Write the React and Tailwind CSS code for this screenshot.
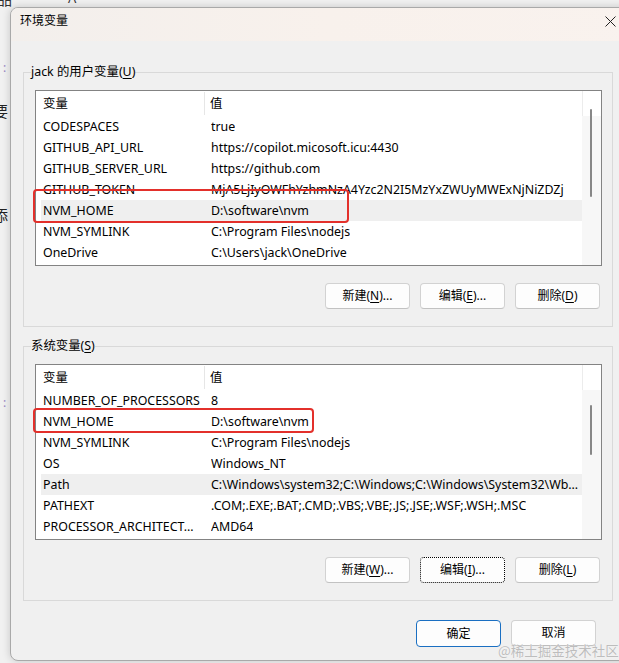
import React from "react";

const FONT = "font-['Noto_Sans','Noto_Sans_CJK_SC',sans-serif]";

function Mn({ children }) {
  return <span className="underline underline-offset-[2px] decoration-[1px]">{children}</span>;
}

function Btn({ children, focus, primary }) {
  let cls =
    "w-[85px] h-[26px] rounded-[4px] flex items-center justify-center text-[12px] leading-[16px] text-black ";
  if (primary) cls += "border-[1.5px] border-[#1a6fc2] bg-[#fdfdfd] h-[27px]";
  else if (focus) cls += "border border-dotted border-black bg-[#fdfdfd]";
  else cls += "border border-[#d2d2d2] border-b-[#c2c2c2] bg-[#fdfdfd]";
  return <div className={cls}>{children}</div>;
}

function VarList({ rows, hover, thumbTop, thumbH, redRect }) {
  return (
    <div className="relative h-[176px] border border-[#838383] bg-white flex text-[12.4px]">
      <div className="flex-1 flex flex-col min-w-0">
        <div className="h-[25px] flex items-stretch shrink-0">
          <div className="w-[169px] pl-[7px] pt-[2px] border-r border-[#e6e6e6] flex items-center my-[1px]">变量</div>
          <div className="pl-[5px] pt-[2px] flex items-center">值</div>
        </div>
        {rows.map((r, i) => (
          <div
            key={i}
            className={
              "h-[21px] shrink-0 ml-[5px] pt-[2px] flex items-center whitespace-nowrap " +
              (i === hover ? "bg-[#efefef]" : "")
            }
          >
            <div className="w-[170px] pl-[2px] shrink-0 overflow-hidden">{r[0]}</div>
            <div className="overflow-hidden">{r[1]}</div>
          </div>
        ))}
      </div>
      <div className="w-[19px] shrink-0 flex flex-col relative">
        <div className="h-[25px] bg-white border-l border-[#ececec]" />
        <div className="flex-1 bg-[#f7f7f7]" />
        <div
          className="absolute left-[8px] w-[2px] rounded-full bg-[#878787]"
          style={{ top: thumbTop, height: thumbH }}
        />
      </div>
      <div
        className="absolute border-[2.5px] border-[#e3302b] rounded-[4px] pointer-events-none"
        style={redRect}
      />
    </div>
  );
}

function Group({ legend, children }) {
  return (
    <fieldset className="border border-[#d9d9d9] pl-[11px] pr-[10px] pt-[10px] pb-[17px]">
      <legend className="-ml-[4px] text-[12.4px] leading-[16px] px-0">{legend}</legend>
      {children}
    </fieldset>
  );
}

const userRows = [
  ["CODESPACES", "true"],
  ["GITHUB_API_URL", "https://copilot.micosoft.icu:4430"],
  ["GITHUB_SERVER_URL", "https://github.com"],
  ["GITHUB_TOKEN", "MjA5LjIyOWFhYzhmNzA4Yzc2N2I5MzYxZWUyMWExNjNiZDZj"],
  ["NVM_HOME", "D:\\software\\nvm"],
  ["NVM_SYMLINK", "C:\\Program Files\\nodejs"],
  ["OneDrive", "C:\\Users\\jack\\OneDrive"],
];

const sysRows = [
  ["NUMBER_OF_PROCESSORS", "8"],
  ["NVM_HOME", "D:\\software\\nvm"],
  ["NVM_SYMLINK", "C:\\Program Files\\nodejs"],
  ["OS", "Windows_NT"],
  ["Path", "C:\\Windows\\system32;C:\\Windows;C:\\Windows\\System32\\Wb…"],
  ["PATHEXT", ".COM;.EXE;.BAT;.CMD;.VBS;.VBE;.JS;.JSE;.WSF;.WSH;.MSC"],
  ["PROCESSOR_ARCHITECT…", "AMD64"],
];

export default function App() {
  return (
    <div className={"relative w-[619px] h-[663px] overflow-hidden bg-[#f1f1f1] text-black text-[12px] " + FONT}>
      {/* background window fragments */}
      <div className="absolute left-[-3px] top-[-10px] text-[15px] leading-[18px] text-[#333]">品</div>
      <div className="absolute left-[31px] top-[-6px] flex gap-[2px]">
        <div className="w-[5px] h-[5px] border border-[#444] rounded-[1px]" />
        <div className="w-[5px] h-[5px] border border-[#444] rounded-[1px]" />
      </div>
      <div className="absolute left-[68px] top-[-10px] text-[13px] leading-[16px] text-[#333]">A</div>
      <div className="absolute left-[3px] top-[60px] text-[12px] leading-[16px] text-[#9a88c4]">:</div>
      <div className="absolute left-[-7px] top-[102px] text-[15px] leading-[18px] text-[#222]">要</div>
      <div className="absolute left-[-7px] top-[206px] text-[15px] leading-[18px] text-[#222]">添</div>
      <div className="absolute left-[3px] top-[395px] text-[12px] leading-[16px] text-[#9a88c4]">:</div>

      {/* dialog */}
      <div className="absolute left-[10px] top-[7px] w-[630px] h-[654px] rounded-[8px] border border-[#a9a9a9] bg-[#f0f0f0] shadow-[0_0_8px_rgba(0,0,0,0.18)] overflow-hidden flex flex-col">
        <div className="h-[33px] shrink-0 flex items-start justify-between pl-[9px] pr-[23px] pt-[5px] bg-gradient-to-r from-[#f3efec] via-[#f8f1ec] to-[#f9f2ee]">
          <div className="text-[12px] leading-[16px]">环境变量</div>
          <svg width="11" height="11" viewBox="0 0 11 11" className="mt-[3px]">
            <path d="M0.5 0.5 L10.5 10.5 M10.5 0.5 L0.5 10.5" stroke="#222" strokeWidth="1" />
          </svg>
        </div>

        <div className="flex flex-col pl-[12px] pr-[26px] pt-[23px]">
          <Group
            legend={
              <>
                jack 的用户变量(<Mn>U</Mn>)
              </>
            }
          >
            <VarList
              rows={userRows}
              hover={4}
              thumbTop={18}
              thumbH={88}
              redRect={{ left: -3, top: 98, width: 316, height: 34 }}
            />
            <div className="flex justify-end gap-[10px] pr-[2px] mt-[17px]">
              <Btn>
                新建(<Mn>N</Mn>)...
              </Btn>
              <Btn>
                编辑(<Mn>E</Mn>)...
              </Btn>
              <Btn>
                删除(<Mn>D</Mn>)
              </Btn>
            </div>
          </Group>

          <div className="mt-[11px]">
            <Group
              legend={
                <>
                  系统变量(<Mn>S</Mn>)
                </>
              }
            >
              <VarList
                rows={sysRows}
                hover={4}
                thumbTop={40}
                thumbH={50}
                redRect={{ left: -3, top: 43, width: 281, height: 25 }}
              />
              <div className="flex justify-end gap-[10px] pr-[2px] mt-[17px]">
                <Btn>
                  新建(<Mn>W</Mn>)...
                </Btn>
                <Btn focus>
                  编辑(<Mn>I</Mn>)...
                </Btn>
                <Btn>
                  删除(<Mn>L</Mn>)
                </Btn>
              </div>
            </Group>
          </div>

          <div className="flex justify-end gap-[10px] mt-[19px] pr-[17px]">
            <Btn primary>确定</Btn>
            <Btn>取消</Btn>
          </div>
        </div>
      </div>

      <div className="absolute left-[498px] top-[641px] whitespace-nowrap text-[13.5px] leading-[18px] text-[#bdbdbd] font-['Noto_Sans_CJK_SC',sans-serif] [text-shadow:0_0_1px_#fff]">
        @稀土掘金技术社区
      </div>
    </div>
  );
}
